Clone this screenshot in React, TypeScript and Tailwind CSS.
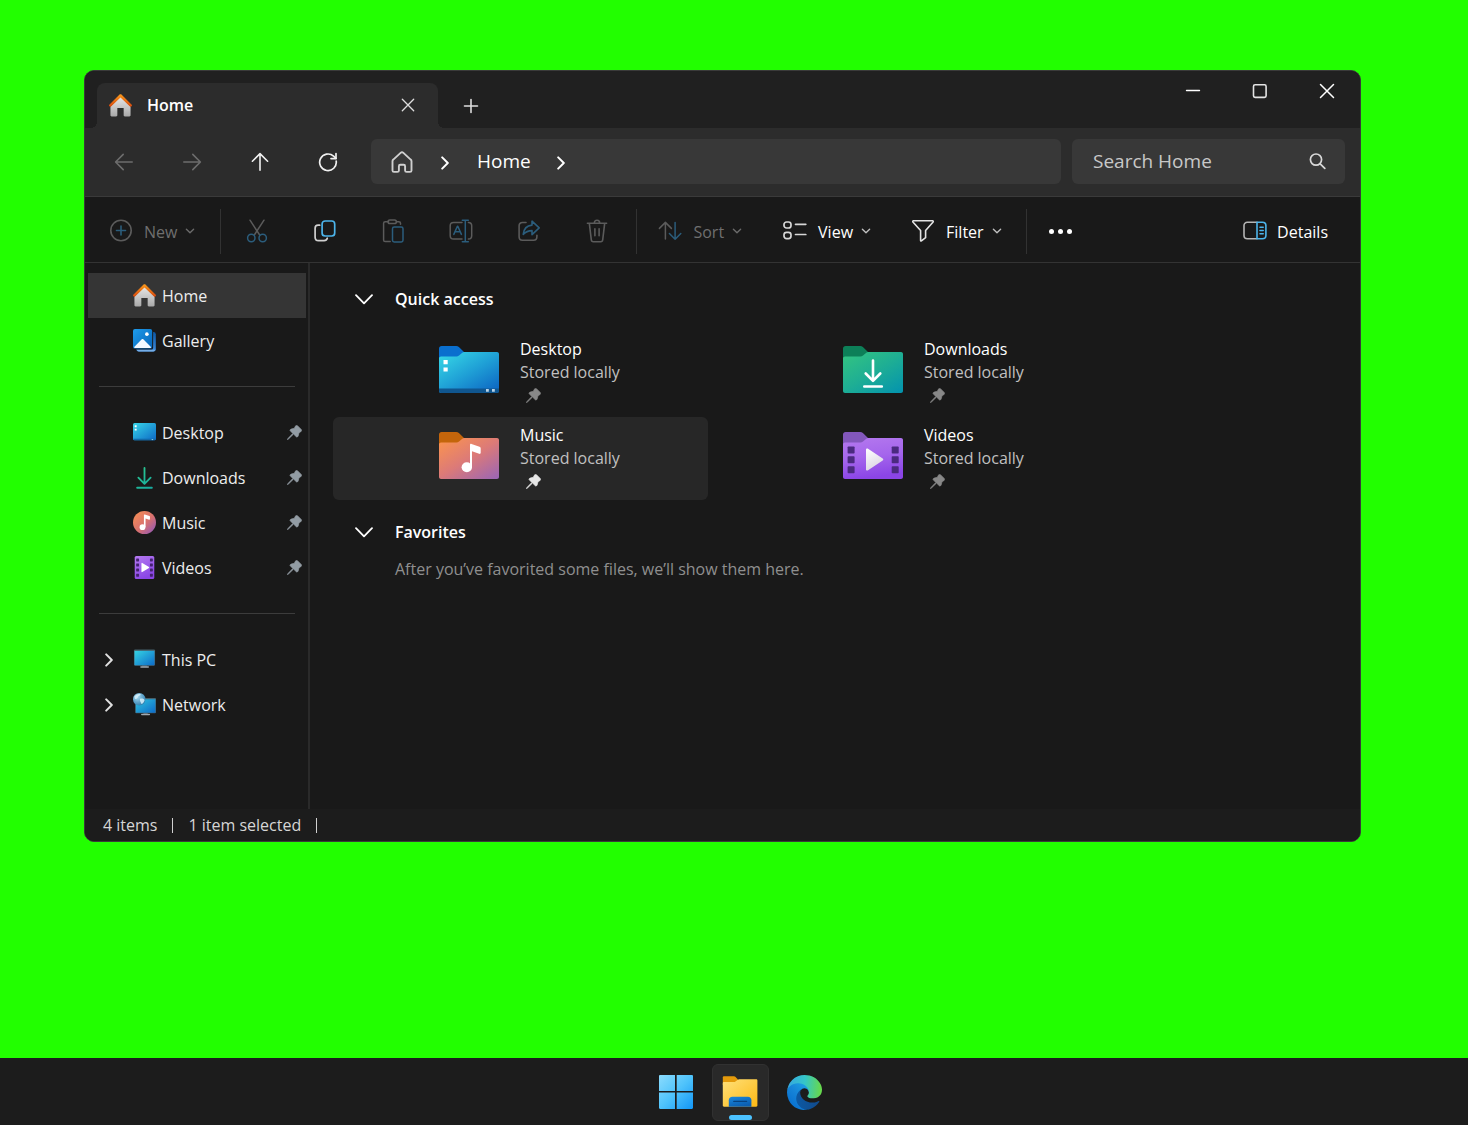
import React, { useState } from "react";

type IconProps = { className?: string };

/* ---------- Window and navigation glyphs ---------- */

const stroke = {
  fill: "none",
  stroke: "currentColor",
  strokeWidth: 1.6,
  strokeLinecap: "round" as const,
  strokeLinejoin: "round" as const,
};

function CloseGlyph({ className }: IconProps) {
  return (
    <svg viewBox="0 0 16 16" className={className} {...stroke} strokeWidth={1.5}>
      <path d="M1.5 1.5l13 13M14.5 1.5l-13 13" />
    </svg>
  );
}

function MaximizeGlyph() {
  return (
    <svg viewBox="0 0 16 16" className="size-4" {...stroke} stroke="#e4e4e4" strokeWidth={1.6}>
      <rect x="1.500" y="1.800" width="12.600" height="12.600" rx="1.600" />
    </svg>
  );
}

function MinimizeGlyph() {
  return (
    <svg viewBox="0 0 16 16" className="size-4" {...stroke} strokeWidth={1.4}>
      <path d="M1.500 7.500h13" />
    </svg>
  );
}

function PlusGlyph({ className }: IconProps) {
  return (
    <svg viewBox="0 0 16 16" className={className} {...stroke}>
      <path d="M8 1.500v13M1.500 8h13" />
    </svg>
  );
}

function ArrowGlyph({ className }: IconProps) {
  return (
    <svg viewBox="0 0 20 20" className={className} {...stroke}>
      <path d="M18.2 10H1.8M9.2 2.4L1.6 10l7.6 7.6" />
    </svg>
  );
}

function RefreshGlyph({ className }: IconProps) {
  return (
    <svg viewBox="0 0 20 20" className={className} {...stroke} strokeWidth={1.7}>
      <path d="M18.2 9.2A8.3 8.3 0 1 1 15.6 4.2L18 6.4" />
      <path d="M18 1.6v5h-5" />
    </svg>
  );
}

function HomeOutline({ className }: IconProps) {
  return (
    <svg viewBox="0 0 22 22" className={className} {...stroke} strokeWidth={1.9}>
      <path d="M9.6 1.9 2.3 8.6c-.5.4-.8 1-.8 1.7v9.1c0 .9.7 1.5 1.5 1.5h3.4c.8 0 1.5-.6 1.5-1.5v-4.200c0-.8.6-1.400 1.400-1.400h3.400c.8 0 1.400.600 1.400 1.400v4.200c0 .9.700 1.500 1.500 1.500H19c.8 0 1.500-.600 1.500-1.500v-9.100c0-.7-.3-1.300-.8-1.700l-7.300-6.700c-.8-.7-2-.7-2.800 0z" />
    </svg>
  );
}

function ChevronRight({ className }: IconProps) {
  return (
    <svg viewBox="0 0 8 14" className={className} {...stroke} strokeWidth={2}>
      <path d="M1.2 1.4 6.8 7l-5.6 5.6" />
    </svg>
  );
}

function ChevronSmall({ className }: IconProps) {
  return (
    <svg viewBox="0 0 10 6" className={className} {...stroke} strokeWidth={1.4}>
      <path d="M1.4 1.2 5 4.7l3.6-3.5" />
    </svg>
  );
}

function ChevronLarge({ className }: IconProps) {
  return (
    <svg viewBox="0 0 18 11" className={className} {...stroke} strokeWidth={1.8}>
      <path d="M1 1.200 9 9.400l8-8.200" />
    </svg>
  );
}

function SearchGlyph({ className }: IconProps) {
  return (
    <svg viewBox="0 0 17 17" className={className} {...stroke} strokeWidth={1.7}>
      <circle cx="7" cy="6.6" r="5.6" />
      <path d="m11.200 10.800 4.600 4.600" />
    </svg>
  );
}

/* ---------- Command bar icons ---------- */

function NewIcon() {
  return (
    <svg viewBox="0 0 24 24" className="size-6" {...stroke}>
      <circle cx="12" cy="11.5" r="10.2" stroke="#5b5b5b" />
      <path d="M12 7v9M7.500 11.500h9" stroke="#2b5d7c" />
    </svg>
  );
}

function CutIcon() {
  return (
    <svg viewBox="0 0 24 24" className="size-6" {...stroke} strokeWidth={1.5}>
      <path d="M5 1.200 14.700 16M19 1.200 9.300 16" stroke="#5b5b5b" />
      <circle cx="6.300" cy="19" r="3.700" stroke="#2b5d7c" />
      <circle cx="17.700" cy="19" r="3.700" stroke="#2b5d7c" />
    </svg>
  );
}

function CopyIcon() {
  return (
    <svg viewBox="0 0 24 24" className="size-6" {...stroke} strokeWidth={1.7}>
      <path d="M6.700 6.200H5.100c-1.800 0-3 1.200-3 3v9c0 2 1.400 3.400 3.400 3.400h5.600c1.700 0 2.800-.9 3.200-2.400" stroke="#d0d0d0" />
      <rect x="9.100" y="2" width="12.600" height="15" rx="3" stroke="#4cb4ea" />
    </svg>
  );
}

function PasteIcon() {
  return (
    <svg viewBox="0 0 24 24" className="size-6" {...stroke} strokeWidth={1.5}>
      <path d="M7.600 2.700H4.200c-1 0-1.600.7-1.600 1.600v16.600c0 1 .7 1.700 1.600 1.700h5M15.400 2.700h2.400c1 0 1.700.7 1.700 1.600v1" stroke="#5b5b5b" />
      <rect x="7" y="1" width="8.400" height="3.600" rx="1.800" stroke="#5b5b5b" />
      <rect x="11.500" y="8" width="10.500" height="15" rx="1.700" stroke="#2b5d7c" />
    </svg>
  );
}

function RenameIcon() {
  return (
    <svg viewBox="0 0 24 24" className="size-6" {...stroke} strokeWidth={1.5}>
      <path d="M13 3.400H4.600C2.600 3.400 1.200 4.800 1.200 6.700v10c0 2 1.400 3.300 3.400 3.300H13M19.400 3.400c2 0 3.300 1.400 3.300 3.300v10c0 2-1.300 3.300-3.300 3.300" stroke="#5b5b5b" />
      <path d="m4.800 15.400 3.600-8.200h.4l3.600 8.200M6.100 12.700h5M13.300 1.200h6M13.300 22.800h6M16.300 1.200v21.600" stroke="#2b5d7c" />
    </svg>
  );
}

function ShareIcon() {
  return (
    <svg viewBox="0 0 24 24" className="size-6" {...stroke} strokeWidth={1.6}>
      <path d="M9 3.500H5.400c-1.900 0-3.300 1.400-3.300 3.300v11c0 2 1.400 3.400 3.300 3.400h11.200c1.900 0 3.300-1.400 3.300-3.400v-1.500" stroke="#5b5b5b" />
      <path d="M15 2.200v3.900c-5 .4-8.200 3.500-8.800 9.300 2.700-2.800 5.200-3.700 8.800-3.800v4.100l7.200-6.800z" stroke="#2b5d7c" />
    </svg>
  );
}

function TrashIcon() {
  return (
    <svg viewBox="0 0 24 24" className="size-6" {...stroke}>
      <path d="M2.400 4.200h19.200M4.300 4.200l2 16.600c.1 1.200 1 1.900 2 1.900h7.400c1 0 1.900-.7 2-1.900l2-16.600M9.300 4c0-1.700 1-2.800 2.700-2.800s2.700 1.100 2.700 2.800M9.900 9.700v7M14.100 9.700v7" stroke="#5b5b5b" />
    </svg>
  );
}

function SortIcon() {
  return (
    <svg viewBox="0 0 24 24" className="size-6" {...stroke} strokeWidth={1.5}>
      <path d="M7.400 20V3.600M1.400 9.400l6-6 6 6" stroke="#5b5b5b" />
      <path d="M17.100 3.600v16.600M11.400 14.500l5.700 5.800 5.700-5.800" stroke="#2b5d7c" />
    </svg>
  );
}

function ViewIcon() {
  return (
    <svg viewBox="0 0 24 24" className="size-6" {...stroke} strokeWidth={1.7}>
      <rect x="1" y="3" width="7" height="6" rx="2.500" stroke="#d6d6d6" />
      <rect x="1" y="13.300" width="7" height="6.300" rx="2.500" stroke="#d6d6d6" />
      <path d="M12.500 5.300h10.300M12.500 15.500h10.300" stroke="#d6d6d6" />
    </svg>
  );
}

function FilterIcon() {
  return (
    <svg viewBox="0 0 24 24" className="size-6" {...stroke} strokeWidth={1.6}>
      <path d="M2.400 1.800h19.200c.6 0 .9.700.5 1.200L14.600 11.500v7.200l-4.200 3.200c-.4.200-.8 0-.8-.4v-10L1.900 3c-.4-.5-.1-1.200.5-1.200z" stroke="#e2e2e2" />
    </svg>
  );
}

function DetailsIcon() {
  return (
    <svg viewBox="0 0 24 24" className="size-6" {...stroke} strokeWidth={1.6}>
      <path d="M14 3.300H4.400c-2 0-3.400 1.400-3.400 3.300v9.800c0 2 1.400 3.300 3.400 3.300H14" stroke="#b5b5b5" />
      <path d="M14 3.300h5.400c2 0 3.500 1.400 3.500 3.300v9.800c0 2-1.500 3.300-3.500 3.300H14zM17 8.200h3.200M17 11.500h3.200M17 14.800h3.200" stroke="#4cb4ea" />
    </svg>
  );
}

/* ---------- Colour icons ---------- */

function HomeColor({ className }: IconProps) {
  const id = React.useId();
  return (
    <svg viewBox="0 0 24 24" className={className}>
      <defs>
        <linearGradient id={id + "w"} x1="0" y1="0" x2="0" y2="1">
          <stop offset="0" stopColor="#e8e8e8" />
          <stop offset="1" stopColor="#a9a9a9" />
        </linearGradient>
        <linearGradient id={id + "r"} x1="0" y1="0" x2="0" y2="1">
          <stop offset="0" stopColor="#f99a1c" />
          <stop offset="1" stopColor="#d8480d" />
        </linearGradient>
      </defs>
      <path d="M12 2.500 1.500 13v9.300c0 .7.500 1.200 1.200 1.200h4.800c.7 0 1.200-.5 1.200-1.200v-7.600h6.600v7.600c0 .7.500 1.200 1.200 1.200h4.800c.7 0 1.200-.5 1.200-1.200V13z" fill={`url(#${id}w)`} />
      <path d="M11 .6.300 11.300c-.4.400-.4.900 0 1.300l.5.500c.4.400.9.400 1.300 0L12 3.700l9.900 9.400c.4.400.9.400 1.300 0l.5-.5c.4-.4.4-.9 0-1.300L13 .6c-.6-.6-1.400-.6-2 0z" fill={`url(#${id}r)`} />
    </svg>
  );
}

function GalleryColor({ className }: IconProps) {
  const id = React.useId();
  return (
    <svg viewBox="0 0 24 24" className={className}>
      <defs>
        <linearGradient id={id + "b"} x1="0" y1="0" x2="1" y2="1">
          <stop offset="0" stopColor="#1e9bea" />
          <stop offset="1" stopColor="#0764b8" />
        </linearGradient>
        <linearGradient id={id + "k"} x1="0" y1="0" x2="0" y2="1">
          <stop offset="0" stopColor="#0b58a5" />
          <stop offset="1" stopColor="#3f8de0" />
        </linearGradient>
      </defs>
      <rect x="3.500" y="3" width="20.300" height="20.600" rx="2.500" fill={`url(#${id}k)`} />
      <path d="M4 21.700h19.200a2.500 2.500 0 0 1-2 1.900H6a2.500 2.500 0 0 1-2-1.900z" fill="#75ade6" />
      <rect x="0" y="0" width="21" height="21.500" fill="#191919" rx="2" />
      <rect x="0" y="0" width="20" height="20.400" rx="2" fill={`url(#${id}b)`} />
      <circle cx="14.500" cy="5.400" r="1.900" fill="#fff" />
      <path d="M1 19 8.900 11c.6-.6 1.500-.6 2.100 0l8 8c-.2.500-.7.700-1.200.7H2.200c-.5 0-1-.2-1.200-.7z" fill="#f2f8ff" />
    </svg>
  );
}

function DesktopColor({ className }: IconProps) {
  const id = React.useId();
  return (
    <svg viewBox="0 0 24 24" className={className}>
      <defs>
        <linearGradient id={id} x1="0" y1="0" x2="1" y2="1">
          <stop offset="0" stopColor="#37d5e8" />
          <stop offset="1" stopColor="#0d69c5" />
        </linearGradient>
      </defs>
      <rect x="0" y="2" width="24" height="18" rx="1.600" fill={`url(#${id})`} />
      <path d="M0 18.600h24a1.600 1.600 0 0 1-1.600 1.500H1.600A1.600 1.600 0 0 1 0 18.600z" fill="#126aa9" />
      <path d="M1.800 4.500h2v2h-2zM1.800 8h2v2h-2z" fill="#fff" />
      <path d="M19.500 18.900h1.500v1h-1.500z" fill="#8fd3ef" />
    </svg>
  );
}

function DownloadColor({ className }: IconProps) {
  const id = React.useId();
  return (
    <svg viewBox="0 0 24 24" className={className}>
      <defs>
        <linearGradient id={id} gradientUnits="userSpaceOnUse" x1="4" y1="2" x2="20" y2="24">
          <stop offset="0" stopColor="#2bc98e" />
          <stop offset="1" stopColor="#16a9a0" />
        </linearGradient>
      </defs>
      <path d="M12 2v16M5.600 12.200l6.400 6.400 6.400-6.400M4.300 22.700h15.400" fill="none" stroke={`url(#${id})`} strokeWidth="1.900" strokeLinecap="round" strokeLinejoin="round" />
    </svg>
  );
}

function MusicColor({ className }: IconProps) {
  const id = React.useId();
  return (
    <svg viewBox="0 0 24 24" className={className}>
      <defs>
        <linearGradient id={id} x1="0.100" y1="0.100" x2="0.900" y2="0.900">
          <stop offset="0" stopColor="#f38b56" />
          <stop offset="0.550" stopColor="#d8716f" />
          <stop offset="1" stopColor="#9a5bb0" />
        </linearGradient>
      </defs>
      <circle cx="12" cy="12" r="12" fill={`url(#${id})`} />
      <circle cx="9.900" cy="16.900" r="3" fill="#fff" />
      <path d="M11.400 4.200c0-.5.400-.8.900-.6l4.800 1.600c.4.200.6.400.6.800v2.400c0 .5-.4.700-.9.600l-3.700-1.200v9.200h-1.700z" fill="#fff" />
    </svg>
  );
}

function VideoColor({ className }: IconProps) {
  const id = React.useId();
  return (
    <svg viewBox="0 0 24 24" className={className}>
      <defs>
        <linearGradient id={id} x1="0" y1="0" x2="0.400" y2="1">
          <stop offset="0" stopColor="#b57af0" />
          <stop offset="1" stopColor="#8a46e6" />
        </linearGradient>
      </defs>
      <rect x="1.800" y="0" width="20.400" height="24" rx="1.600" fill={`url(#${id})`} />
      {[2.6, 7.700, 13, 18.400].map((y) => (
        <g key={y} fill="#43226f">
          <rect x="3.300" y={y} width="3" height="3.200" rx=".5" />
          <rect x="17.700" y={y} width="3" height="3.200" rx=".5" />
        </g>
      ))}
      <path d="M8.800 7.700v8.600c0 .5.500.7.900.5l7-4.300c.4-.3.400-.7 0-1l-7-4.300c-.4-.2-.9 0-.9.500z" fill="#fff" />
    </svg>
  );
}

function PcColor({ className }: IconProps) {
  const id = React.useId();
  return (
    <svg viewBox="0 0 24 24" className={className}>
      <defs>
        <linearGradient id={id} x1="0" y1="0" x2="1" y2="1">
          <stop offset="0" stopColor="#35d3e3" />
          <stop offset="1" stopColor="#0d6bc9" />
        </linearGradient>
      </defs>
      <path d="M9.500 17h5v2.400h-5z" fill="#5f6870" />
      <rect x="7.500" y="19" width="9.200" height="1.600" rx=".8" fill="#a0a9b1" />
      <rect x="1" y="1.500" width="22" height="17" rx="1.200" fill="#47606b" />
      <rect x="1.600" y="3" width="20.800" height="15" fill={`url(#${id})`} />
    </svg>
  );
}

function NetworkColor({ className }: IconProps) {
  const id = React.useId();
  return (
    <svg viewBox="0 0 24 24" className={className}>
      <defs>
        <linearGradient id={id + "s"} x1="0" y1="0" x2="1" y2="1">
          <stop offset="0" stopColor="#2fc4dd" />
          <stop offset="1" stopColor="#0d6bc9" />
        </linearGradient>
        <radialGradient id={id + "g"} cx="0.350" cy="0.300" r="0.800">
          <stop offset="0" stopColor="#a9dcf2" />
          <stop offset="1" stopColor="#2677aa" />
        </radialGradient>
      </defs>
      <path d="M10.800 20h4.600v2.200h-4.600z" fill="#5f6870" />
      <rect x="8.400" y="21.700" width="9.400" height="1.600" rx=".8" fill="#a0a9b1" />
      <rect x="2.300" y="5.300" width="21.700" height="15.900" rx="1" fill="#47606b" />
      <rect x="2.900" y="6.500" width="20.500" height="14.100" fill={`url(#${id}s)`} />
      <circle cx="6.500" cy="6.500" r="6.500" fill={`url(#${id}g)`} />
      <path d="M1.500 3.700C3 1.300 6 .4 8.200 1.300 7.600 3 5.500 2.600 5 4.500c-.4 1.500-1.800 2-3 1.500zM7.400 6c1.500-.7 3.600-.3 4.700 1.200-.4 2-1.600 3.600-3.300 4.300-.3-1.700-2.400-3.800-1.400-5.500z" fill="#d7f0fa" opacity=".85" />
    </svg>
  );
}

function Pin({ className }: IconProps) {
  return (
    <svg viewBox="0 0 16 16" className={className} fill="currentColor" stroke="currentColor" strokeWidth=".7" strokeLinejoin="round">
      <path d="M9.200.9c.5-.6 1.400-.6 2-.1l4 4c.6.600.5 1.500-.1 2L12.800 8.300l-.8 3.200c-.1.300-.2.500-.4.700l-.5.500c-.3.300-.7.300-1 0L7 9.700l-5.400 5.200c-.2.200-.6.400-1.200.7.200-.6.400-1 .6-1.200L6.200 9 3.400 6.100c-.3-.3-.3-.8 0-1l.5-.5c.2-.2.500-.4.800-.4l3.100-.7z" />
    </svg>
  );
}

/* ---------- Folder tiles ---------- */

type FolderKind = "desktop" | "downloads" | "music" | "videos";

const folderColors: Record<FolderKind, { tab: string; from: string; mid: string; to: string }> = {
  desktop: { tab: "#0a6fce", from: "#37d8e6", mid: "#1fa0d6", to: "#0c63c2" },
  downloads: { tab: "#0d7f58", from: "#33c481", mid: "#1eae94", to: "#0494ae" },
  music: { tab: "#c4650b", from: "#fb944e", mid: "#dc7a78", to: "#9c66b4" },
  videos: { tab: "#8257bb", from: "#b478ee", mid: "#a566ec", to: "#8b45e6" },
};

function Folder({ kind }: { kind: FolderKind }) {
  const id = React.useId();
  const c = folderColors[kind];
  return (
    <svg viewBox="0 0 60 48" className="h-12 w-[60px] shrink-0">
      <defs>
        <linearGradient id={id} x1="0.050" y1="0" x2={kind === "videos" ? "0.250" : "0.950"} y2="1">
          <stop offset="0" stopColor={c.from} />
          <stop offset="0.500" stopColor={c.mid} />
          <stop offset="1" stopColor={c.to} />
        </linearGradient>
        <linearGradient id={id + "p"} x1="0" y1="0" x2="0.400" y2="1">
          <stop offset="0" stopColor="#fff" />
          <stop offset="1" stopColor="#dcd6e4" />
        </linearGradient>
      </defs>
      <path d="M0 2.500C0 1.100 1.100 0 2.500 0h14.700c1 0 2 .4 2.700 1.100L25 6v10H0z" fill={c.tab} />
      <path d="M2 10.500h15.500c1 0 1.800-.3 2.500-.9l3-2.600c.7-.600 1.500-.9 2.400-.9H58c1.100 0 2 .9 2 2v36.900c0 1.100-.9 2-2 2H2c-1.100 0-2-.9-2-2V12.500c0-1.100.9-2 2-2z" fill={`url(#${id})`} />
      {kind === "desktop" && (
        <>
          <path d="M0 42.500h60V45c0 1.100-.9 2-2 2H2c-1.100 0-2-.9-2-2z" fill="#10568f" />
          <path d="M4.500 14h4.200v4.200H4.500zM4.500 21.400h4.200v4.200H4.500z" fill="#fff" />
          <path d="M47 43h2.800v2.800H47zM53 43h2.800v2.800H53z" fill="#b8d2e8" />
        </>
      )}
      {kind === "downloads" && (
        <path d="M30 14.600V34M22.700 27.500l7.300 7.300 7.300-7.300M21.300 40.500h17.500" fill="none" stroke="#fff" strokeWidth="2.600" strokeLinecap="round" strokeLinejoin="round" />
      )}
      {kind === "music" && (
        <>
          <ellipse cx="27.800" cy="35.300" rx="5.200" ry="5" fill="#fff" />
          <path d="M31 13c0-.9.700-1.400 1.500-1.100l8 2.900c.8.300 1.200.8 1.200 1.600v4.400c0 .9-.7 1.300-1.500 1L33 19.300v16h-2z" fill="#fff" />
        </>
      )}
      {kind === "videos" && (
        <>
          {[14.500, 24.300, 34.200].map((y) => (
            <g key={y} fill="#4b2a80">
              <rect x="4.600" y={y} width="7" height="7" rx=".8" />
              <rect x="48.700" y={y} width="7" height="7" rx=".8" />
            </g>
          ))}
          <path d="M23 17.600v19.800c0 1 .9 1.400 1.700 1l15-9.900c.8-.5.800-1.400 0-2l-15-9.900c-.8-.4-1.700 0-1.700 1z" fill={`url(#${id}p)`} />
        </>
      )}
    </svg>
  );
}

function Tile({ kind, name, selected, onSelect }: { kind: FolderKind; name: string; selected: boolean; onSelect: () => void }) {
  return (
    <button
      type="button"
      aria-pressed={selected}
      onClick={onSelect}
      className={
        "flex h-[83px] items-start rounded-md pt-[7px] pl-[106px] text-left " +
        (selected ? "bg-[#272727]" : "")
      }
    >
      <span className="pt-2">
        <Folder kind={kind} />
      </span>
      <span className="flex flex-col pl-[21px]">
        <span className="leading-[23px] text-white">{name}</span>
        <span className="leading-[23px] text-[#c0c0c0]">Stored locally</span>
        <Pin className={"mt-1 ml-1.5 size-[15px] " + (selected ? "text-[#e6e6e6]" : "text-[#888888]")} />
      </span>
    </button>
  );
}

/* ---------- Sidebar ---------- */

function NavItem({
  icon,
  label,
  selected,
  pinned,
  expandable,
}: {
  icon: React.ReactNode;
  label: string;
  selected?: boolean;
  pinned?: boolean;
  expandable?: boolean;
}) {
  return (
    <li>
      <button
        type="button"
        aria-current={selected ? "page" : undefined}
        className={"flex h-[45px] w-full items-center pr-1 pl-[17px] " + (selected ? "bg-[#353535]" : "")}
      >
        <span className="w-7">{expandable && <ChevronRight className="h-3.5 w-2 text-[#e0e0e0]" />}</span>
        {icon}
        <span className="flex-1 pl-[6px] text-left text-[#ededed]">{label}</span>
        {pinned && <Pin className="size-[15px] text-[#929ca4]" />}
      </button>
    </li>
  );
}

function NavDivider() {
  return (
    <li role="separator" className="flex h-[47px] items-center px-[11px]">
      <span className="h-px w-full bg-[#3c3c3c]" />
    </li>
  );
}

/* ---------- Command bar ---------- */

function IconButton({ label, children, disabled }: { label: string; children: React.ReactNode; disabled?: boolean }) {
  return (
    <button type="button" aria-label={label} disabled={disabled} className="flex h-11 w-[68px] items-center justify-center">
      {children}
    </button>
  );
}

function MenuButton({ icon, label, disabled, className }: { icon: React.ReactNode; label: string; disabled?: boolean; className?: string }) {
  return (
    <button
      type="button"
      disabled={disabled}
      className={"flex h-11 items-center gap-2 " + (disabled ? "text-[#6f6f6f] " : "text-white ") + (className ?? "")}
    >
      {icon}
      <span className="pt-px pl-[3px]">{label}</span>
      <ChevronSmall className={"h-1.5 w-2.5 " + (disabled ? "text-[#6a6a6a]" : "text-[#bdbdbd]")} />
    </button>
  );
}

function BarDivider() {
  return <span className="h-[45px] w-px bg-[#323232]" />;
}

/* ---------- Taskbar icons ---------- */

function StartIcon() {
  return (
    <svg viewBox="0 0 34 34" className="size-[34px]">
      <defs>
        <linearGradient id="start" gradientUnits="userSpaceOnUse" x1="0" y1="0" x2="34" y2="34">
          <stop offset="0" stopColor="#8cdcfd" />
          <stop offset="0.500" stopColor="#4fc3fb" />
          <stop offset="1" stopColor="#1296f6" />
        </linearGradient>
      </defs>
      <path d="M1.200 0h14.800v16H0V1.200C0 .5.500 0 1.200 0zM17.700 0h15.100c.7 0 1.200.5 1.200 1.200V16H17.700zM0 17.600h16V34H1.200C.5 34 0 33.500 0 32.800zM17.700 17.600H34v15.200c0 .7-.5 1.200-1.200 1.200H17.700z" fill="url(#start)" />
    </svg>
  );
}

function ExplorerIcon() {
  return (
    <svg viewBox="0 0 36 32" className="h-8 w-9">
      <defs>
        <linearGradient id="exFront" x1="0" y1="0" x2="1" y2="1">
          <stop offset="0" stopColor="#ffe07a" />
          <stop offset="1" stopColor="#fdb914" />
        </linearGradient>
        <linearGradient id="exBase" x1="0" y1="0" x2="0.500" y2="1">
          <stop offset="0" stopColor="#1b8ade" />
          <stop offset="1" stopColor="#0a5db0" />
        </linearGradient>
      </defs>
      <path d="M.8 1.500C.8.700 1.400.2 2.200.2H12c.5 0 1 .2 1.300.5L16 3.600V9H.8z" fill="#e49a0b" />
      <path d="M2 6h9.800c.6 0 1.200-.2 1.700-.6l2.300-1.700c.4-.3.900-.5 1.400-.5h17c.7 0 1.200.5 1.200 1.200v25.200c0 .7-.5 1.200-1.200 1.200H2c-.7 0-1.200-.5-1.200-1.200V7.200C.8 6.500 1.300 6 2 6z" fill="url(#exFront)" />
      <path d="M6.800 30.800v-6.600c0-2 1.500-3.500 3.500-3.500h15.600c2 0 3.500 1.500 3.500 3.500v6.600z" fill="url(#exBase)" />
      <path d="M11.800 25.400h12.800" stroke="#07427f" strokeWidth="1.300" strokeLinecap="round" />
    </svg>
  );
}

function EdgeIcon() {
  return (
    <svg viewBox="0 0 256 256" className="size-[35px]">
      <defs>
        <linearGradient id="edgeA" x1="63" x2="242" y1="178" y2="178" gradientUnits="userSpaceOnUse">
          <stop offset="0" stopColor="#0c59a4" />
          <stop offset="1" stopColor="#114a8b" />
        </linearGradient>
        <linearGradient id="edgeB" x1="153" x2="46" y1="99" y2="216" gradientUnits="userSpaceOnUse">
          <stop offset="0" stopColor="#1b9de2" />
          <stop offset="0.500" stopColor="#1684d8" />
          <stop offset="1" stopColor="#0b74d1" />
        </linearGradient>
        <linearGradient id="edgeC" x1="10" x2="245" y1="80" y2="100" gradientUnits="userSpaceOnUse">
          <stop offset="0" stopColor="#35a9e0" />
          <stop offset="0.500" stopColor="#35c6c8" />
          <stop offset="1" stopColor="#66d84e" />
        </linearGradient>
      </defs>
      <path d="M231 190.500c-3.400 1.800-6.900 3.400-10.500 4.700a101.900 101.900 0 0 1-35.900 6.500c-47.300 0-88.500-32.500-88.500-74.300a31.500 31.500 0 0 1 16.400-27.300c-42.800 1.800-53.800 46.400-53.800 72.500 0 73.900 68.100 81.400 82.800 81.400 7.900 0 19.800-2.300 27-4.600l1.300-.4a128.300 128.300 0 0 0 66.600-52.800 4 4 0 0 0-5.400-5.700z" fill="url(#edgeA)" />
      <path d="M105.700 241.400a79.200 79.200 0 0 1-22.700-21.300 80.700 80.700 0 0 1 29.500-120c3.200-1.500 8.500-4.100 15.600-4a32.400 32.400 0 0 1 25.700 13 31.900 31.900 0 0 1 6.300 18.700c0-.2 24.500-79.600-80-79.600-43.900 0-80 41.700-80 78.200a130.200 130.200 0 0 0 12.100 56 128 128 0 0 0 156.400 67.100 75.500 75.500 0 0 1-62.800-8.100z" fill="url(#edgeB)" />
      <path d="M152.300 148.900c-.8 1-3.300 2.500-3.300 5.700 0 2.600 1.700 5.100 4.700 7.300 14.400 10 41.500 8.600 41.600 8.600a59.600 59.600 0 0 0 30.300-8.300 61.400 61.400 0 0 0 30.400-52.900c.3-22.400-8-37.300-11.300-43.900C223.500 23.900 177.700 0 128 0A128 128 0 0 0 0 126.200c.5-36.500 36.800-66 80-66 3.500 0 23.500.3 42 10.100 16.300 8.600 24.900 18.900 30.800 29.200 6.200 10.700 7.300 24.100 7.300 29.500s-2.700 13.300-7.800 19.900z" fill="url(#edgeC)" />
    </svg>
  );
}

/* ---------- Page ---------- */

const tiles: { kind: FolderKind; name: string }[] = [
  { kind: "desktop", name: "Desktop" },
  { kind: "downloads", name: "Downloads" },
  { kind: "music", name: "Music" },
  { kind: "videos", name: "Videos" },
];

export default function App() {
  const [selected, setSelected] = useState<FolderKind>("music");
  const icon = "size-[23px] shrink-0";

  return (
    <div className="flex min-h-screen flex-col bg-[#22ff00] font-['Open_Sans','Noto_Sans',sans-serif] text-base text-white">
      <div className="flex-1 pt-[70px] pr-[107px] pb-10 pl-[84px]">
        <section aria-label="File Explorer" className="overflow-hidden rounded-[10px] border border-[#3a3a3a] bg-[#191919]">
          <header className="flex items-end bg-[#202020]">
            <div className="relative ml-3 flex h-[45px] w-[341px] items-center rounded-t-lg bg-[#2c2c2c] pb-px pl-3">
              <span className="absolute bottom-0 -left-1.5 size-1.5 bg-[radial-gradient(circle_at_0_0,transparent_6px,#2c2c2c_6px)]" />
              <span className="absolute -right-1.5 bottom-0 size-1.5 bg-[radial-gradient(circle_at_100%_0,transparent_6px,#2c2c2c_6px)]" />
              <HomeColor className={icon} />
              <span className="flex-1 pl-[15px] font-semibold">Home</span>
              <button type="button" aria-label="Close tab" className="mr-2 flex size-11 items-center justify-center text-[#dedede]">
                <CloseGlyph className="size-3.5" />
              </button>
            </div>
            <button type="button" aria-label="New tab" className="ml-[11px] flex size-11 items-center justify-center text-[#dedede]">
              <PlusGlyph className="size-4" />
            </button>
            <div className="ml-auto flex h-[57px] items-start">
              <button type="button" aria-label="Minimize" className="flex h-10 w-[67px] items-center justify-center">
                <MinimizeGlyph />
              </button>
              <button type="button" aria-label="Maximize" className="flex h-10 w-[67px] items-center justify-center">
                <MaximizeGlyph />
              </button>
              <button type="button" aria-label="Close" className="flex h-10 w-[67px] items-center justify-center">
                <CloseGlyph className="size-4" />
              </button>
            </div>
          </header>

          <div className="flex items-center border-b border-[#3a3a3a] bg-[#2c2c2c] pt-[11px] pr-[15px] pb-3 pl-[5px]">
            <nav aria-label="History" className="flex text-[#f0f0f0]">
              <IconButton label="Back" disabled>
                <ArrowGlyph className="size-5 text-[#6c6c6c]" />
              </IconButton>
              <IconButton label="Forward" disabled>
                <ArrowGlyph className="size-5 rotate-180 text-[#6c6c6c]" />
              </IconButton>
              <IconButton label="Up">
                <ArrowGlyph className="size-5 rotate-90" />
              </IconButton>
              <IconButton label="Refresh">
                <RefreshGlyph className="size-5" />
              </IconButton>
            </nav>
            <div className="ml-[9px] flex h-[45px] flex-1 items-center rounded-md bg-[#383838] pl-5">
              <button type="button" aria-label="Home location" className="text-[#cfcfcf]">
                <HomeOutline className="size-[22px]" />
              </button>
              <ChevronRight className="mt-[2px] ml-7 h-3.5 w-2" />
              <button type="button" className="ml-7 text-[19px]">
                Home
              </button>
              <ChevronRight className="mt-[2px] ml-[26px] h-3.5 w-2" />
            </div>
            <label className="ml-[11px] flex h-[45px] w-[273px] items-center rounded-md bg-[#383838] pr-[19px] pl-[21px]">
              <input
                type="text"
                aria-label="Search Home"
                placeholder="Search Home"
                className="min-w-0 flex-1 bg-transparent text-[19px] text-white outline-none placeholder:text-[#c8c8c8]"
              />
              <SearchGlyph className="size-[17px] text-[#d8d8d8]" />
            </label>
          </div>

          <div role="toolbar" aria-label="Commands" className="flex h-[66px] items-center border-b border-[#333333] pt-[3px] pr-8 pl-6">
            <MenuButton icon={<NewIcon />} label="New" disabled className="mr-[25px]" />
            <BarDivider />
            <div className="flex pr-[5px] pl-[2px]">
              <IconButton label="Cut" disabled><CutIcon /></IconButton>
              <IconButton label="Copy"><CopyIcon /></IconButton>
              <IconButton label="Paste" disabled><PasteIcon /></IconButton>
              <IconButton label="Rename" disabled><RenameIcon /></IconButton>
              <IconButton label="Share" disabled><ShareIcon /></IconButton>
              <IconButton label="Delete" disabled><TrashIcon /></IconButton>
            </div>
            <BarDivider />
            <MenuButton icon={<SortIcon />} label="Sort" disabled className="ml-[21px]" />
            <MenuButton icon={<ViewIcon />} label="View" className="ml-[41px]" />
            <MenuButton icon={<FilterIcon />} label="Filter" className="mr-6 ml-10" />
            <BarDivider />
            <button type="button" aria-label="See more" className="ml-[10px] flex h-11 w-12 items-center justify-center gap-1">
              <span className="size-[5px] rounded-full bg-white" />
              <span className="size-[5px] rounded-full bg-white" />
              <span className="size-[5px] rounded-full bg-white" />
            </button>
            <button type="button" className="ml-auto flex h-11 items-center gap-[10px]">
              <DetailsIcon />
              <span className="pt-px">Details</span>
            </button>
          </div>

          <div className="flex min-h-[546px]">
            <nav aria-label="Folders" className="w-[225px] shrink-0 border-r-2 border-[#2a2a2a] pt-[10px] pr-[2px] pl-[3px]">
              <ul>
                <NavItem icon={<HomeColor className={icon} />} label="Home" selected />
                <NavItem icon={<GalleryColor className={icon} />} label="Gallery" />
                <NavDivider />
                <NavItem icon={<DesktopColor className={icon} />} label="Desktop" pinned />
                <NavItem icon={<DownloadColor className={icon} />} label="Downloads" pinned />
                <NavItem icon={<MusicColor className={icon} />} label="Music" pinned />
                <NavItem icon={<VideoColor className={icon} />} label="Videos" pinned />
                <NavDivider />
                <NavItem icon={<PcColor className={icon} />} label="This PC" expandable />
                <NavItem icon={<NetworkColor className={icon} />} label="Network" expandable />
              </ul>
            </nav>

            <main className="min-w-0 flex-1 pt-6 pl-[23px]">
              <h2 className="font-semibold">
                <button type="button" aria-expanded="true" className="flex h-6 items-center gap-[22px] pl-[22px]">
                  <ChevronLarge className="h-[11px] w-[18px]" />
                  Quick access
                </button>
              </h2>
              <div className="grid grid-cols-[repeat(auto-fill,375px)] gap-x-[29px] gap-y-[3px] pt-5">
                {tiles.map((t) => (
                  <Tile key={t.kind} kind={t.kind} name={t.name} selected={selected === t.kind} onSelect={() => setSelected(t.kind)} />
                ))}
              </div>
              <h2 className="pt-5 font-semibold">
                <button type="button" aria-expanded="true" className="flex h-6 items-center gap-[22px] pl-[22px]">
                  <ChevronLarge className="h-[11px] w-[18px]" />
                  Favorites
                </button>
              </h2>
              <p className="pt-[13px] pl-[62px] text-[#8f8f8f]">After you’ve favorited some files, we’ll show them here.</p>
            </main>
          </div>

          <footer className="flex h-8 items-center bg-[#1c1c1c] pl-[18px] text-[#d6d6d6]">
            <span>4 items</span>
            <span className="mx-[15px] h-[15px] w-px bg-[#d0d0d0]" />
            <span>1 item selected</span>
            <span className="mx-[15px] h-[15px] w-px bg-[#d0d0d0]" />
          </footer>
        </section>
      </div>

      <nav aria-label="Taskbar" className="flex h-[67px] items-center justify-center gap-[7px] bg-[#1c1c1c] pt-px pl-3">
        <button type="button" aria-label="Start" className="flex size-[57px] items-center justify-center">
          <StartIcon />
        </button>
        <button
          type="button"
          aria-label="File Explorer"
          className="relative flex size-[57px] items-center justify-center rounded-md border border-[#313131] bg-[#292929]"
        >
          <ExplorerIcon />
          <span className="absolute bottom-0 h-[5px] w-[23px] rounded-full bg-[#4cc2ff]" />
        </button>
        <button type="button" aria-label="Microsoft Edge" className="flex size-[57px] items-center justify-center">
          <EdgeIcon />
        </button>
      </nav>
    </div>
  );
}
